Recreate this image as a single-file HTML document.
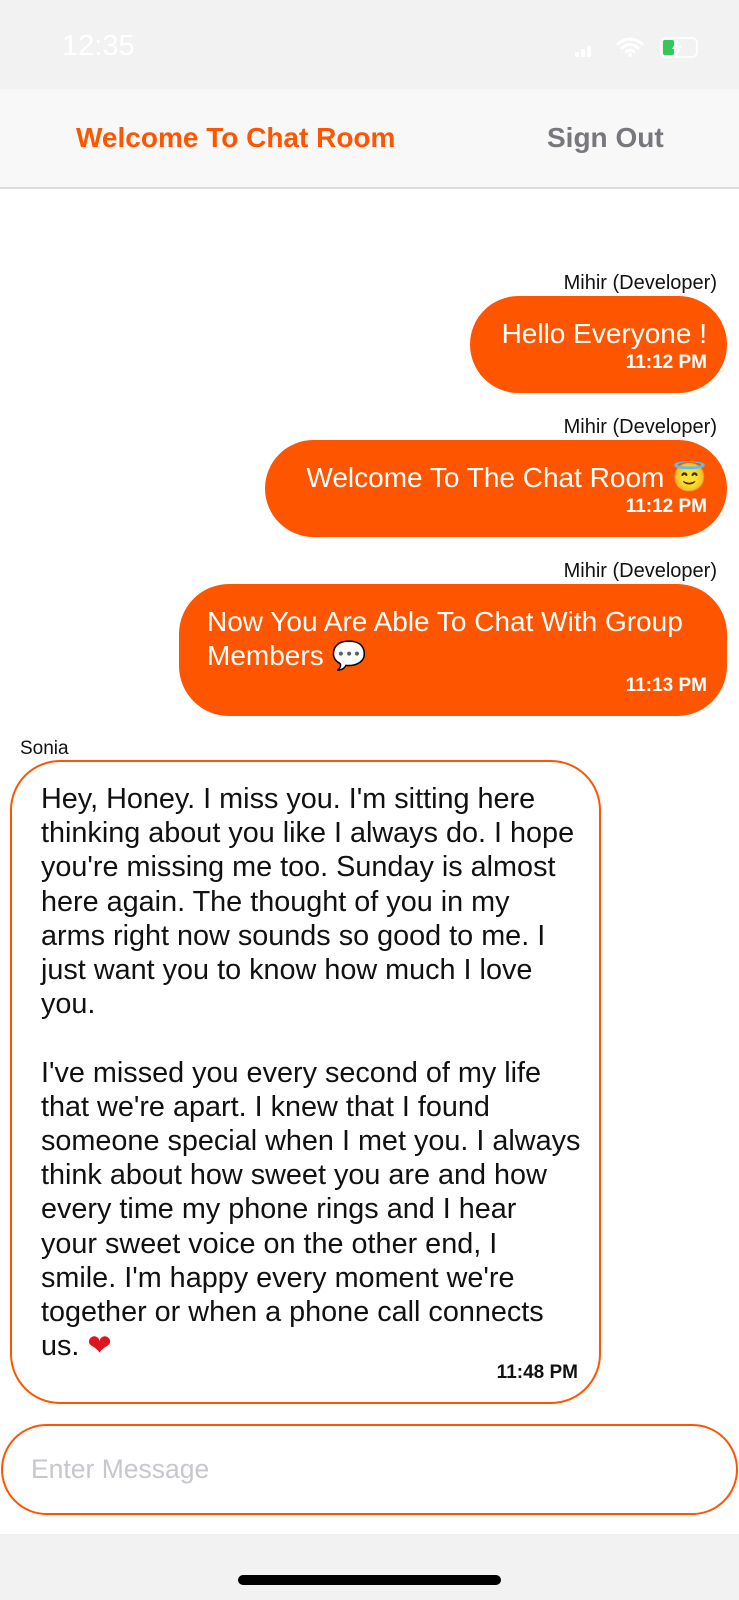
<!DOCTYPE html>
<html><head><meta charset="utf-8"><style>
*{margin:0;padding:0;box-sizing:border-box}
body{width:739px;height:1600px;position:relative;background:#fff;font-family:"Liberation Sans",sans-serif;overflow:hidden}
.a{position:absolute;white-space:nowrap}
.name{font-size:20px;color:#111;right:22px;line-height:22px}
.b{position:absolute;background:#fe5500;border-radius:50px;right:12px;color:#fff}
.t{font-size:28px;line-height:34px}
.tm{font-weight:bold;font-size:19px;line-height:22px}
</style></head><body>
<div class="a" style="left:0;top:0;width:739px;height:89px;background:#f2f2f2"></div>
<div class="a" style="left:62px;top:29px;font-size:29px;color:#fff;line-height:34px">12:35</div>
<div class="a" style="left:575px;top:44px;width:20px;height:13px">
<div style="position:absolute;left:0;bottom:0;width:4px;height:5px;background:#fff;border-radius:1px"></div>
<div style="position:absolute;left:6px;bottom:0;width:4px;height:8px;background:#fff;border-radius:1px"></div>
<div style="position:absolute;left:12px;bottom:0;width:4px;height:11px;background:#fff;border-radius:1px"></div>
</div>
<svg class="a" style="left:616px;top:36px" width="28" height="22" viewBox="0 0 28 22"><path d="M2 8 Q14 -2 26 8 M6 12 Q14 5 22 12 M10 16 Q14 12 18 16" stroke="#fff" stroke-width="3" fill="none" stroke-linecap="round"/><circle cx="14" cy="19" r="2" fill="#fff"/></svg>
<div class="a" style="left:660px;top:37px;width:38px;height:21px;border:2px solid #fff;border-radius:6px;opacity:.8"></div>
<div class="a" style="left:663px;top:40px;width:11px;height:15px;background:#34c759;border-radius:2px"></div>
<svg class="a" style="left:670px;top:36px" width="14" height="24" viewBox="0 0 14 24"><path d="M9 1 L2 13 H7 L5 23 L12 10 H7 Z" fill="#fff"/></svg>
<div class="a" style="left:0;top:89px;width:739px;height:100px;background:#f8f8f8;border-bottom:2px solid #ddd"></div>
<div class="a" style="left:76px;top:122px;font-size:28px;font-weight:bold;color:#fe5500;line-height:32px">Welcome To Chat Room</div>
<div class="a" style="left:547px;top:122px;font-size:28px;font-weight:bold;color:#77777d;line-height:32px">Sign Out</div>

<div class="a name" style="top:272px">Mihir (Developer)</div>
<div class="b" style="top:296px;height:97px;width:257px">
<div class="a t" style="right:20px;top:21px">Hello Everyone !</div>
<div class="a tm" style="right:20px;top:56px">11:12 PM</div></div>

<div class="a name" style="top:416px">Mihir (Developer)</div>
<div class="b" style="top:440px;height:97px;width:462px">
<div class="a t" style="right:20px;top:21px">Welcome To The Chat Room 😇</div>
<div class="a tm" style="right:20px;top:56px">11:12 PM</div></div>

<div class="a name" style="top:560px">Mihir (Developer)</div>
<div class="b" style="top:584px;height:132px;width:548px">
<div class="a t" style="left:28px;top:21px">Now You Are Able To Chat With Group<br>Members 💬</div>
<div class="a tm" style="right:20px;top:91px">11:13 PM</div></div>

<div class="a" style="left:20px;top:738px;font-size:19px;color:#111;line-height:22px">Sonia</div>
<div class="a" style="left:10px;top:760px;width:591px;height:644px;border:2px solid #fe5500;border-radius:50px"></div>
<div class="a" style="left:41px;top:782px;font-size:28.8px;line-height:34.2px;color:#111">Hey, Honey. I miss you. I'm sitting here<br>thinking about you like I always do. I hope<br>you're missing me too. Sunday is almost<br>here again. The thought of you in my<br>arms right now sounds so good to me. I<br>just want you to know how much I love<br>you.<br><br>I've missed you every second of my life<br>that we're apart. I knew that I found<br>someone special when I met you. I always<br>think about how sweet you are and how<br>every time my phone rings and I hear<br>your sweet voice on the other end, I<br>smile. I'm happy every moment we're<br>together or when a phone call connects<br>us. <span style="color:#e0141e">❤</span></div>
<div class="a tm" style="right:161px;top:1362px;color:#111">11:48 PM</div>

<div class="a" style="left:1px;top:1424px;width:737px;height:91px;border:2px solid #fe5500;border-radius:46px"></div>
<div class="a" style="left:31px;top:1454px;font-size:26.5px;color:#c7c7cd;line-height:30px">Enter Message</div>
<div class="a" style="left:0;top:1534px;width:739px;height:66px;background:#f2f2f2"></div>
<div class="a" style="left:238px;top:1575px;width:263px;height:10px;background:#000;border-radius:5px"></div>
</body></html>
